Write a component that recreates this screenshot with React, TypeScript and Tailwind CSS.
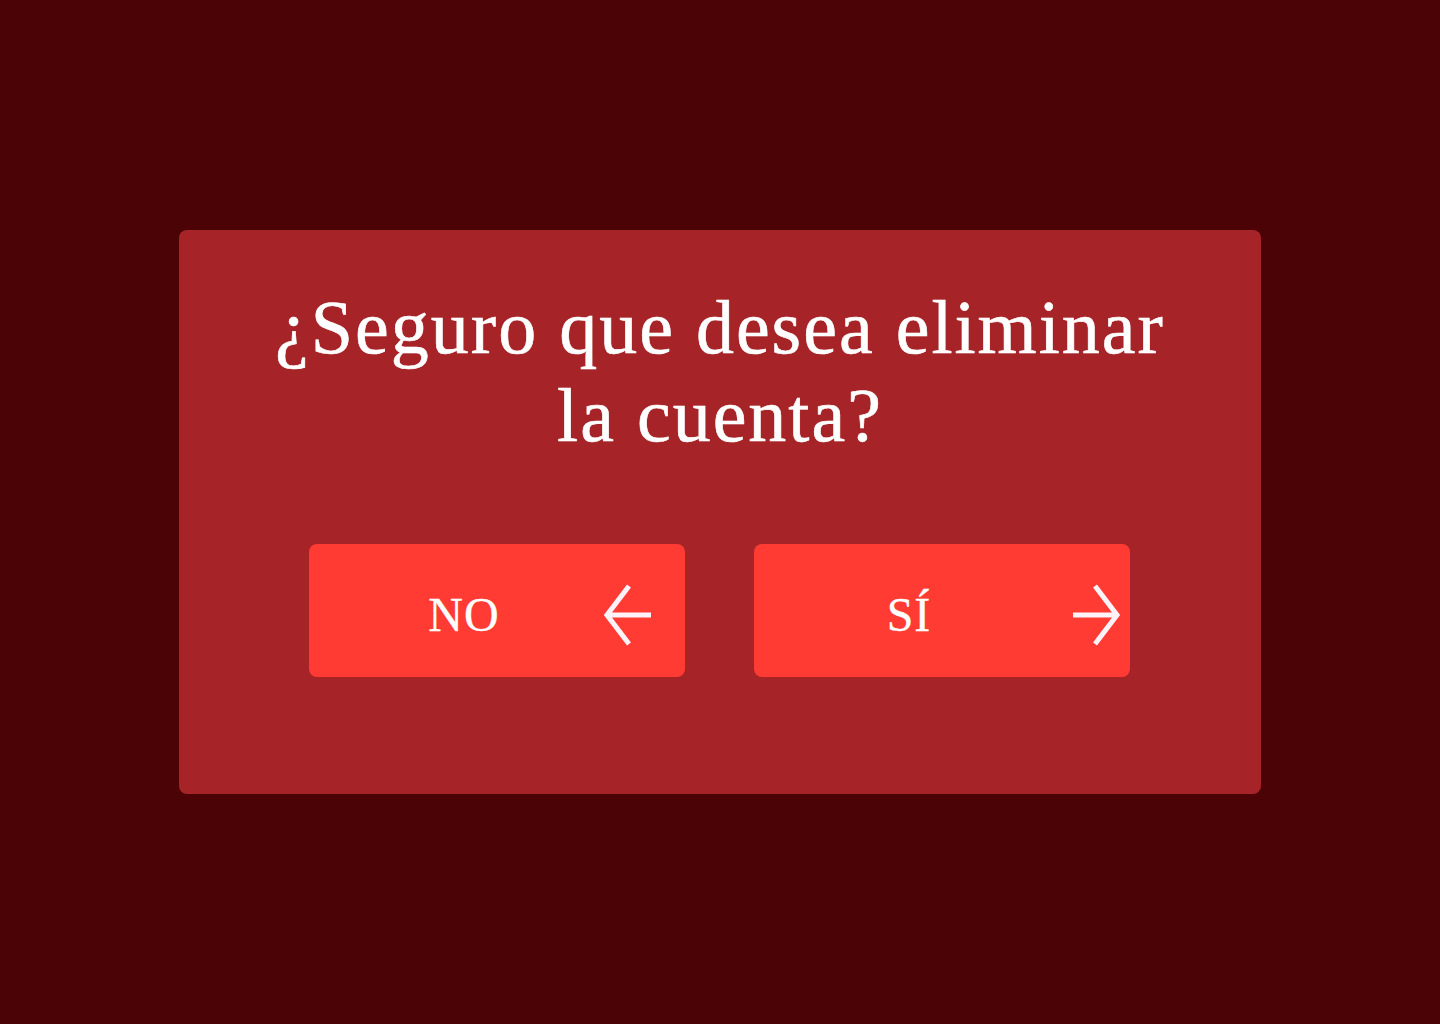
const ArrowLeft = ({ className }: { className?: string }) => (
  <svg viewBox="0 0 48 62" width="48" height="62" fill="none" className={className}>
    <path d="M25 2 L3 31 L25 60 M3 31 L47 31" stroke="#fdf2f8" strokeWidth="5" />
  </svg>
);

const ArrowRight = ({ className }: { className?: string }) => (
  <svg viewBox="0 0 48 62" width="48" height="62" fill="none" className={className}>
    <path d="M23 2 L45 31 L23 60 M45 31 L1 31" stroke="#fdf2f8" strokeWidth="5" />
  </svg>
);

const App = () => {
  return (
    <div className="min-h-screen w-full bg-[#4b0306] flex items-center justify-center font-['Liberation_Serif',serif]">
      {/* card */}
      <div className="w-[1082px] rounded-lg bg-[#a62428] pt-[53px] pb-[117px] flex flex-col items-center">
        <h1 className="max-w-[960px] text-center text-white text-[76px] leading-[88px] tracking-[2px] font-normal [-webkit-text-stroke:0.6px_white]">
          ¿Seguro que desea eliminar la cuenta?
        </h1>
        {/* buttons */}
        <div className="mt-[85px] flex gap-[69px] -translate-x-px">
          <button className="w-[376px] h-[133px] rounded-lg bg-[#ff3b33] flex items-center">
            <span className="w-[311px] shrink-0 text-center text-white text-[48px] leading-none tracking-[1px] pt-[9px] [-webkit-text-stroke:0.3px_white]">
              NO
            </span>
            <ArrowLeft className="-ml-[16px] mt-[9px]" />
          </button>
          <button className="w-[376px] h-[133px] rounded-lg bg-[#ff3b33] flex items-center">
            <span className="w-[311px] shrink-0 text-center text-white text-[48px] leading-none tracking-[1px] pt-[9px] [-webkit-text-stroke:0.3px_white]">
              SÍ
            </span>
            <ArrowRight className="ml-[7px] mt-[9px]" />
          </button>
        </div>
      </div>
    </div>
  );
};

export default App;
